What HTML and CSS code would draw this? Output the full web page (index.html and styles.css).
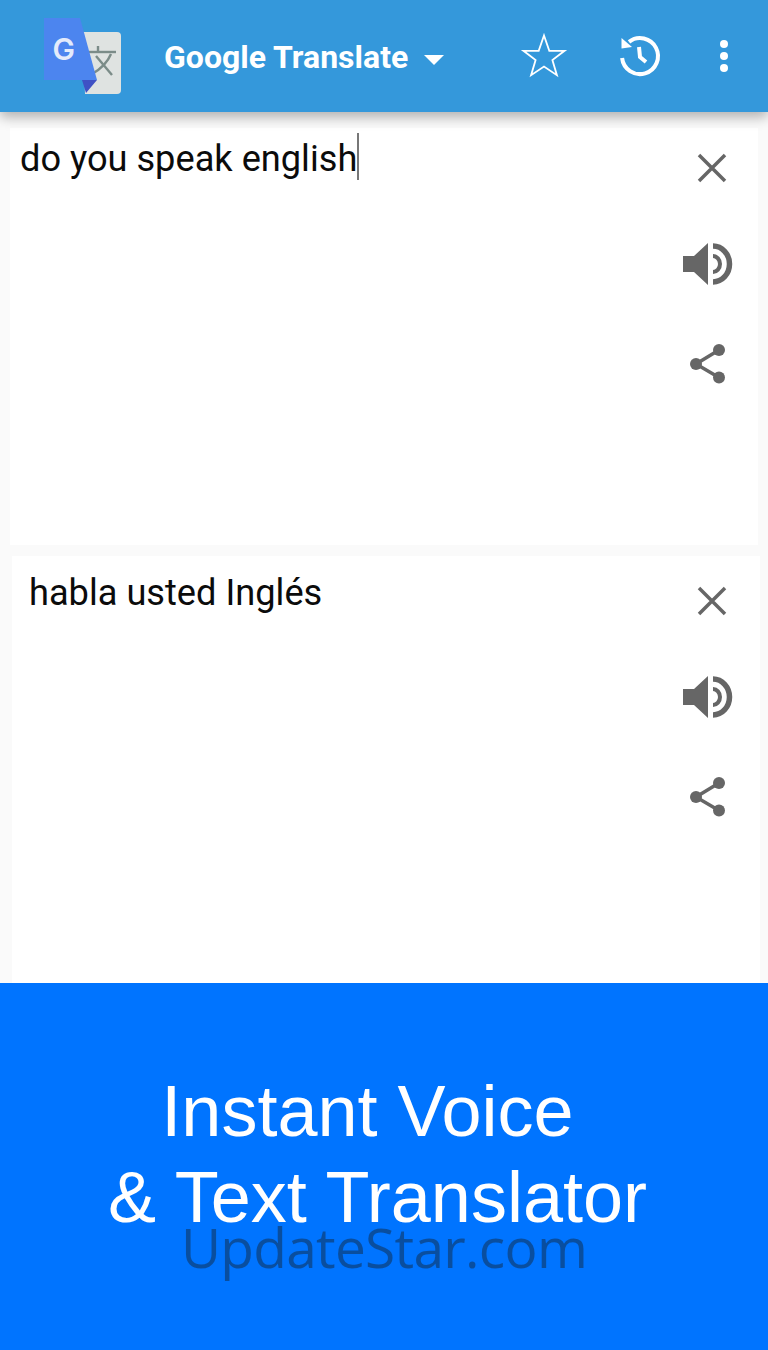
FILE: index.html
```html
<!DOCTYPE html>
<html lang="en">

<head>
    <meta charset="UTF-8">
    <meta name="viewport" content="width=device-width, initial-scale=1.0">
    <title>Google Translate</title>
    <link rel="stylesheet" href="styles.css">
</head>
<body>
    <div class="main">
        <header class="topbar">
            <svg class="logo" width="80" height="80" viewBox="0 0 80 80">
                <path d="M39 14H73Q77 14 77 18V72Q77 76 73 76H41Z" fill="#dfe3e1"/>
                <g fill="none" stroke="#7b8c88" stroke-width="2.400">
                    <path d="M45 34H72"/>
                    <path d="M54 28V34"/>
                    <path d="M67 36Q62 48 48 56"/>
                    <path d="M52 38L68 57"/>
                </g>
                <path d="M0 0H36L53 62H0Z" fill="#4c85ef"/>
                <path d="M38 62H53L42 75Z" fill="#3f51c4"/>
                <text class="logo-g" x="8.500" y="42">G</text>
            </svg>
            <div class="title">Google Translate</div>
            <div class="caret"></div>
            <div class="actions">
                <svg class="star" width="48" height="48" viewBox="0 0 48 48">
                    <path d="M24 3.500L29.300 18.800H44.500L32.400 28L36.900 43.200L24 34.500L11.100 43.200L15.600 28L3.500 18.800H18.700Z" fill="none" stroke="#fff" stroke-width="1.800"/>
                </svg>
                <svg class="history" width="48" height="48" viewBox="0 0 48 48">
                    <path d="M13 9.800A18 18 0 1 1 6.100 26" fill="none" stroke="#fff" stroke-width="4"/>
                    <path d="M5.500 6V16.500L16 15Z" fill="#fff"/>
                    <path d="M23 15L24 25L30 30" fill="none" stroke="#fff" stroke-width="4"/>
                </svg>
                <svg class="dots" width="16" height="36" viewBox="0 0 16 36">
                    <circle cx="8" cy="6" r="4" fill="#fff"/>
                    <circle cx="8" cy="18" r="4" fill="#fff"/>
                    <circle cx="8" cy="30" r="4" fill="#fff"/>
                </svg>
            </div>
        </header>

        <section class="card card-top">
            <div class="text source">do you speak english<span class="cursor"></span></div>
            <div class="tools">
                <svg class="close" width="32" height="32" viewBox="0 0 32 32">
                    <path d="M3 3L29 29M29 3L3 29" stroke="#666" stroke-width="3.500" fill="none"/>
                </svg>
                <svg class="speaker" width="52" height="46" viewBox="0 0 52 46">
                    <path d="M1 15H12L26 2V44L12 31H1Z" fill="#666"/>
                    <path d="M31 15A7 8 0 0 1 31 31" fill="none" stroke="#666" stroke-width="4"/>
                    <path d="M31 5A16.500 18 0 0 1 31 41" fill="none" stroke="#666" stroke-width="5.500"/>
                </svg>
                <svg class="share" width="40" height="42" viewBox="0 0 40 42">
                    <path d="M31 7L8 21L31 34.500" fill="none" stroke="#666" stroke-width="3.500"/>
                    <circle cx="31" cy="7" r="6" fill="#666"/>
                    <circle cx="8" cy="21" r="6" fill="#666"/>
                    <circle cx="31" cy="34.500" r="6" fill="#666"/>
                </svg>
            </div>
        </section>

        <section class="card card-bottom">
            <div class="text target">habla usted Inglés</div>
            <div class="tools">
                <svg class="close" width="32" height="32" viewBox="0 0 32 32">
                    <path d="M3 3L29 29M29 3L3 29" stroke="#666" stroke-width="3.500" fill="none"/>
                </svg>
                <svg class="speaker" width="52" height="46" viewBox="0 0 52 46">
                    <path d="M1 15H12L26 2V44L12 31H1Z" fill="#666"/>
                    <path d="M31 15A7 8 0 0 1 31 31" fill="none" stroke="#666" stroke-width="4"/>
                    <path d="M31 5A16.500 18 0 0 1 31 41" fill="none" stroke="#666" stroke-width="5.500"/>
                </svg>
                <svg class="share" width="40" height="42" viewBox="0 0 40 42">
                    <path d="M31 7L8 21L31 34.500" fill="none" stroke="#666" stroke-width="3.500"/>
                    <circle cx="31" cy="7" r="6" fill="#666"/>
                    <circle cx="8" cy="21" r="6" fill="#666"/>
                    <circle cx="31" cy="34.500" r="6" fill="#666"/>
                </svg>
            </div>
        </section>

        <section class="promo">
            <h1 class="promo-text">Instant Voice&nbsp;<br>&amp; Text Translator</h1>
            <div class="watermark">UpdateStar.com</div>
        </section>
    </div>
</body>
</html>
```

FILE: styles.css
```css
* {
    margin: 0;
    padding: 0;
    box-sizing: border-box;
}
body {
    font-family: Roboto, sans-serif;
}
.main {
    height: 1350px;
    width: 768px;
    background-color: #fafafa;
    overflow: hidden;
    display: flex;
    flex-direction: column;
}
.topbar {
    height: 112px;
    background-color: #3498db;
    box-shadow: 0 5px 12px rgba(0, 0, 0, 0.3);
    display: flex;
    align-items: center;
    position: relative;
    padding-left: 44px;
}
.logo {
    margin-top: 4px;
    overflow: visible;
}
.logo-g {
    font-family: Inter, sans-serif;
    font-weight: 600;
    font-size: 30px;
    fill: #e3ebfb;
}
.title {
    margin-left: 40px;
    margin-top: 2px;
    color: #fff;
    font-size: 32px;
    font-weight: 700;
}
.caret {
    margin-left: 16px;
    margin-top: 8px;
    border-left: 10px solid transparent;
    border-right: 10px solid transparent;
    border-top: 10px solid #fff;
}
.actions {
    margin-left: auto;
    padding-right: 36px;
    display: flex;
    align-items: center;
}
.star {
    margin-right: 48px;
}
.history {
    margin-right: 52px;
}
.card {
    background-color: #fff;
    display: flex;
    justify-content: space-between;
}
.card-top {
    height: 417px;
    margin: 16px 10px 0 10px;
    padding: 5px 24px 0 10px;
}
.card-bottom {
    height: 427px;
    margin: 11px 8px 0 12px;
    padding: 11px 26px 0 17px;
}
.text {
    font-size: 36.200px;
    line-height: 46px;
    color: #0b0b0b;
}
.source {
    display: flex;
    height: 52px;
    line-height: 52px;
}
.target {
    margin-top: 3px;
}
.cursor {
    width: 2px;
    height: 47px;
    background-color: #777;
}
.tools {
    width: 52px;
    display: flex;
    flex-direction: column;
    align-items: center;
    padding-top: 19px;
}
.card-bottom .tools {
    padding-top: 18px;
}
.close {
    margin-left: 8px;
}
.speaker {
    margin-top: 57px;
}
.share {
    margin-top: 56px;
}
.promo {
    flex: 1;
    background-color: #0074ff;
    position: relative;
    padding-top: 85px;
}
.promo-text {
    font-family: "Liberation Sans", Arial, sans-serif;
    font-weight: 400;
    font-size: 72px;
    line-height: 86px;
    color: #fff;
    text-align: center;
    padding-right: 13px;
}
.watermark {
    position: absolute;
    left: 0;
    right: 0;
    top: 229px;
    text-align: center;
    font-family: "Open Sans", sans-serif;
    font-size: 55px;
    letter-spacing: -0.700px;
    line-height: 70px;
    color: rgba(16, 48, 80, 0.55);
}
```
